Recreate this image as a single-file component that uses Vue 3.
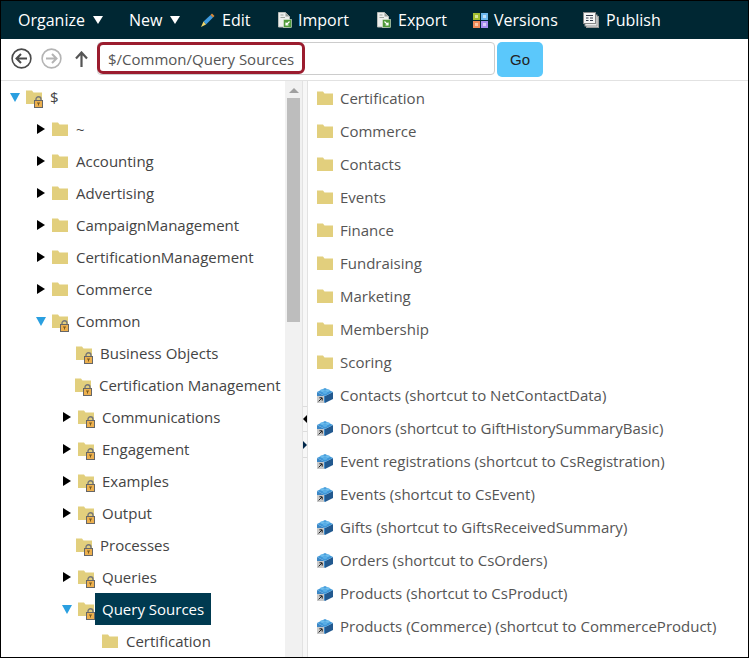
<template>
  <div class="frame">
    <div class="toolbar">
      <div v-for="t in tools" :key="t.label" class="tool" :class="`tool--${t.key}`">
        <svg v-if="t.key === 'edit'" class="tool__icon" width="16" height="16" viewBox="0 0 16 16">
          <path d="M3.5 9.5 L10.5 3 L13 5.5 L6 12.5 Z" fill="#3f9be0" />
          <path d="M10.5 3 L12 1.5 L14.5 4 L13 5.5 Z" fill="#d98a3a" />
          <path d="M3.5 9.5 L6 12.5 L1 15 Z" fill="#efd66a" />
        </svg>
        <svg v-else-if="t.key === 'import' || t.key === 'export'" class="tool__icon" width="14" height="16" viewBox="0 0 14 16">
          <path d="M0.5 0.5 H7.5 L11.5 4.5 V15 H0.5 Z" fill="#eef0ee" stroke="#b9bdb9" />
          <path d="M7.5 0.5 V4.5 H11.5 Z" fill="#9aa09a" />
          <path d="M2.5 3 H5.5 M2.5 5.5 H7" stroke="#a0a6a0" />
          <rect x="5.5" y="7.5" width="8" height="8" fill="#4f9a3a" stroke="#dfe8d8" stroke-width="0.6" />
          <path :d="t.key === 'import' ? 'M11.5 9.5 L8 13 M8 10.5 V13 H10.5' : 'M7.5 9.5 L11 13 M11 10.5 V13 H8.5'" stroke="#fff" stroke-width="1.2" fill="none" />
        </svg>
        <svg v-else-if="t.key === 'versions'" class="tool__icon" width="15" height="15" viewBox="0 0 15 15">
          <rect x="0" y="0" width="7" height="7" fill="#a2bd2e" />
          <rect x="2" y="2" width="3" height="3" fill="#d8e49a" />
          <rect x="8" y="0" width="7" height="7" fill="#6cb8ee" />
          <rect x="10" y="2" width="3" height="3" fill="#bfe0f8" />
          <rect x="0" y="8" width="7" height="7" fill="#f08a5a" />
          <rect x="2" y="10" width="3" height="3" fill="#f8c8a8" />
          <rect x="8" y="8" width="7" height="7" fill="#a78df0" />
          <rect x="10" y="10" width="3" height="3" fill="#d8ccf8" />
        </svg>
        <svg v-else-if="t.key === 'publish'" class="tool__icon" width="16" height="16" viewBox="0 0 16 16">
          <rect x="3.5" y="4.5" width="12" height="11" fill="#e4e4e4" stroke="#999" />
          <rect x="2" y="3" width="12" height="11" fill="#ececec" stroke="#999" />
          <rect x="0.5" y="0.5" width="12" height="11" fill="#f4f4f4" stroke="#888" />
          <path d="M3 3.5 H10 M3 6 H5.5 M7 6 H10 M3 8.5 H5.5 M7 8.5 H10" stroke="#333a4a" />
        </svg>
        <span>{{ t.label }}</span>
        <span v-if="t.caret" class="tool__caret"></span>
      </div>
    </div>

    <div class="address">
      <svg width="21" height="21" viewBox="0 0 21 21" class="nav-back">
        <circle cx="10.5" cy="10.5" r="9.4" fill="#fff" stroke="#4a4a4a" stroke-width="1.6" />
        <path d="M16 10.5 H5.5 M10 6 L5.5 10.5 L10 15" fill="none" stroke="#4a4a4a" stroke-width="2" />
      </svg>
      <svg width="21" height="21" viewBox="0 0 21 21" class="nav-forward">
        <circle cx="10.5" cy="10.5" r="9.4" fill="#fff" stroke="#b4b4b4" stroke-width="1.6" />
        <path d="M5 10.5 H15.5 M11 6 L15.5 10.5 L11 15" fill="none" stroke="#b4b4b4" stroke-width="2" />
      </svg>
      <svg width="13" height="16" viewBox="0 0 13 16" class="nav-up">
        <path d="M6.5 16 V2 M1 7.5 L6.5 1.5 L12 7.5" fill="none" stroke="#555" stroke-width="2.2" />
      </svg>
      <div class="path-box">
        <div class="path-box__text">$/Common/Query Sources</div>
        <div class="path-box__mark"></div>
      </div>
      <button class="go">Go</button>
    </div>

    <div class="panes">
      <div class="tree">
        <div
          v-for="n in treeRows"
          :key="n.label"
          class="tree-row"
          :style="{ paddingLeft: n.indent + 'px' }"
        >
          <span v-if="n.toggle === 'open'" class="caret caret--open"></span>
          <span v-else-if="n.toggle === 'closed'" class="caret caret--closed"></span>
          <span class="folder-wrap">
            <svg width="16" height="14" viewBox="0 0 16 14">
              <path d="M0 0.5 H6 L7.5 2.5 H16 V14 H0 Z" fill="#e2cf7d" />
            </svg>
            <svg v-if="n.lock" class="lock" width="9" height="12" viewBox="0 0 9 12">
              <path d="M2 5 V3.2 a2.5 2.5 0 0 1 5 0 V5" fill="none" stroke="#777" stroke-width="1.4" />
              <rect x="0.5" y="4.5" width="8" height="7" fill="#edb04e" stroke="#666" />
              <path d="M3 7 H6 M4.5 7 V9.5" stroke="#775a20" />
            </svg>
          </span>
          <span class="tree-label" :class="{ 'tree-label--selected': n.selected }">{{ n.label }}</span>
        </div>
      </div>

      <div class="scrollbar">
        <div class="scrollbar__arrow"></div>
        <div class="scrollbar__thumb"></div>
      </div>

      <div class="splitter">
        <div class="splitter__btn splitter__btn--left"><span class="grip grip--left"></span></div>
        <div class="splitter__btn splitter__btn--right"><span class="grip grip--right"></span></div>
      </div>

      <div class="list">
        <div v-for="f in listFolders" :key="f" class="list-row">
          <svg class="list-icon" width="16" height="14" viewBox="0 0 16 14">
            <path d="M0 0.5 H6 L7.5 2.5 H16 V14 H0 Z" fill="#e2cf7d" />
          </svg>
          <span>{{ f }}</span>
        </div>
        <div v-for="s in shortcuts" :key="s" class="list-row">
          <svg class="list-icon" width="16" height="16" viewBox="0 0 16 16">
            <path d="M0 5 L8 9 V16 L0 12 Z" fill="#3b87c6" />
            <path d="M16 5 L8 9 V16 L16 12 Z" fill="#22598f" />
            <path d="M0 5 L8 1 L16 5 L8 9 Z" fill="#3f97d8" />
            <ellipse cx="5.5" cy="3.6" rx="2.4" ry="1.3" fill="#6dbcec" />
            <ellipse cx="10.5" cy="3.6" rx="2.4" ry="1.3" fill="#6dbcec" />
            <ellipse cx="8" cy="5.6" rx="2.4" ry="1.3" fill="#5aafe6" />
            <rect x="0" y="9" width="7" height="7" fill="#c9c9c9" />
            <path d="M1.6 14.4 L5 11 M2.4 10.8 H5.2 V13.6" fill="none" stroke="#222" stroke-width="1" />
          </svg>
          <span>{{ s }}</span>
        </div>
      </div>
    </div>
  </div>
</template>

<script setup>
const tools = [
  { key: 'organize', label: 'Organize', caret: true },
  { key: 'new', label: 'New', caret: true },
  { key: 'edit', label: 'Edit' },
  { key: 'import', label: 'Import' },
  { key: 'export', label: 'Export' },
  { key: 'versions', label: 'Versions' },
  { key: 'publish', label: 'Publish' },
]

const treeRows = [
  { label: '$', indent: 9, toggle: 'open', lock: true },
  { label: '~', indent: 36, toggle: 'closed' },
  { label: 'Accounting', indent: 36, toggle: 'closed' },
  { label: 'Advertising', indent: 36, toggle: 'closed' },
  { label: 'CampaignManagement', indent: 36, toggle: 'closed' },
  { label: 'CertificationManagement', indent: 36, toggle: 'closed' },
  { label: 'Commerce', indent: 36, toggle: 'closed' },
  { label: 'Common', indent: 35, toggle: 'open', lock: true },
  { label: 'Business Objects', indent: 75, lock: true },
  { label: 'Certification Management', indent: 74, lock: true },
  { label: 'Communications', indent: 62, toggle: 'closed', lock: true },
  { label: 'Engagement', indent: 62, toggle: 'closed', lock: true },
  { label: 'Examples', indent: 62, toggle: 'closed', lock: true },
  { label: 'Output', indent: 62, toggle: 'closed', lock: true },
  { label: 'Processes', indent: 75, lock: true },
  { label: 'Queries', indent: 62, toggle: 'closed', lock: true },
  { label: 'Query Sources', indent: 61, toggle: 'open', lock: true, selected: true },
  { label: 'Certification', indent: 101 },
]

const listFolders = [
  'Certification',
  'Commerce',
  'Contacts',
  'Events',
  'Finance',
  'Fundraising',
  'Marketing',
  'Membership',
  'Scoring',
]

const shortcuts = [
  'Contacts (shortcut to NetContactData)',
  'Donors (shortcut to GiftHistorySummaryBasic)',
  'Event registrations (shortcut to CsRegistration)',
  'Events (shortcut to CsEvent)',
  'Gifts (shortcut to GiftsReceivedSummary)',
  'Orders (shortcut to CsOrders)',
  'Products (shortcut to CsProduct)',
  'Products (Commerce) (shortcut to CommerceProduct)',
]
</script>

<style>
html,
body {
  margin: 0;
  background: #fff;
}
</style>

<style scoped>
.frame {
  box-sizing: border-box;
  width: 749px;
  height: 658px;
  border: 1px solid #000;
  display: flex;
  flex-direction: column;
  overflow: hidden;
  font-family: "Open Sans", sans-serif;
  font-size: 15px;
  color: #444;
}

.toolbar {
  height: 38px;
  flex: none;
  background: #002733;
  display: flex;
  align-items: center;
  padding-left: 17px;
  color: #fff;
  font-size: 16px;
}

.tool {
  display: flex;
  align-items: center;
}

.tool--organize { width: 111px; }
.tool--new { width: 71px; }
.tool--edit { width: 78px; }
.tool--import { width: 99px; }
.tool--export { width: 96px; }
.tool--versions { width: 110px; }

.tool__icon {
  margin-right: 6px;
}

.tool--export .tool__icon,
.tool--publish .tool__icon {
  margin-right: 7px;
}

.tool__caret {
  margin-left: 8px;
  width: 0;
  height: 0;
  border-left: 5px solid transparent;
  border-right: 5px solid transparent;
  border-top: 8px solid #fff;
}

.address {
  height: 42px;
  flex: none;
  box-sizing: border-box;
  padding-top: 3px;
  border-bottom: 1px solid #e2e2e2;
  display: flex;
  align-items: flex-start;
}

.nav-back { margin: 6px 0 0 10px; }
.nav-forward { margin: 6px 0 0 9px; }
.nav-up { margin: 9px 0 0 13px; }

.path-box {
  position: relative;
  box-sizing: border-box;
  margin-left: 9px;
  width: 398px;
  height: 33px;
  border: 1px solid #ccc;
  border-radius: 4px;
  display: flex;
  align-items: center;
  padding-left: 10px;
  padding-top: 1px;
  font-size: 15px;
  color: #555;
}

/* callout drawn over the input */
.path-box__mark {
  position: absolute;
  left: -1px;
  top: -1px;
  box-sizing: border-box;
  width: 208px;
  height: 32px;
  border: 3px solid #9b1c2e;
  border-radius: 6px;
}

.go {
  margin-left: 2px;
  width: 46px;
  height: 35px;
  border: none;
  border-radius: 5px;
  background: #5bc8fb;
  color: #222;
  font-family: "Liberation Sans", sans-serif;
  font-size: 15px;
  padding: 0;
}

.panes {
  flex: 1;
  min-height: 0;
  display: flex;
}

.tree {
  width: 284px;
  flex: none;
  overflow: hidden;
}

.tree-row {
  height: 32px;
  display: flex;
  align-items: center;
  box-sizing: border-box;
  white-space: nowrap;
}

.caret {
  flex: none;
  width: 0;
  height: 0;
}

.caret--closed {
  margin-right: 7px;
  border-top: 5px solid transparent;
  border-bottom: 5px solid transparent;
  border-left: 8px solid #000;
}

.caret--open {
  margin-right: 6px;
  border-left: 5px solid transparent;
  border-right: 5px solid transparent;
  border-top: 9px solid #2a9fe0;
}

.folder-wrap {
  position: relative;
  display: flex;
  flex: none;
  width: 16px;
  height: 14px;
  margin-right: 8px;
}

.lock {
  position: absolute;
  right: -1px;
  bottom: -4px;
}

.tree-label--selected {
  background: #003a50;
  color: #fff;
  line-height: 32px;
  padding: 0 7px;
  margin-left: -7px;
  position: relative;
}

.scrollbar {
  width: 17px;
  flex: none;
  background: #f1f1f1;
}

.scrollbar__arrow {
  margin: 7px auto 0;
  width: 0;
  height: 0;
  border-left: 5px solid transparent;
  border-right: 5px solid transparent;
  border-bottom: 5px solid #a0a0a0;
}

.scrollbar__thumb {
  margin: 5px 2px 0;
  height: 224px;
  background: #bdbdbd;
}

.splitter {
  width: 5px;
  flex: none;
  box-sizing: border-box;
  border-left: 1px solid #e2e2e2;
  background: #f7f7f7;
  display: flex;
  flex-direction: column;
  padding-top: 325px;
}

.splitter__btn {
  height: 25px;
  box-sizing: border-box;
  border-top: 1px solid #dcdcdc;
  display: flex;
  align-items: center;
}

.splitter__btn--right {
  height: 27px;
  border-bottom: 1px solid #dcdcdc;
}

.grip {
  width: 0;
  height: 0;
  border-top: 4px solid transparent;
  border-bottom: 4px solid transparent;
}

.grip--left {
  border-right: 4px solid #000;
}

.grip--right {
  border-left: 4px solid #00264a;
}

.list {
  flex: 1;
  overflow: hidden;
  border-left: 1px solid #e2e2e2;
  color: #555;
}

.list-row {
  height: 33px;
  display: flex;
  align-items: center;
  padding-left: 9px;
  white-space: nowrap;
}

.list-icon {
  flex: none;
  margin-right: 7px;
}
</style>
